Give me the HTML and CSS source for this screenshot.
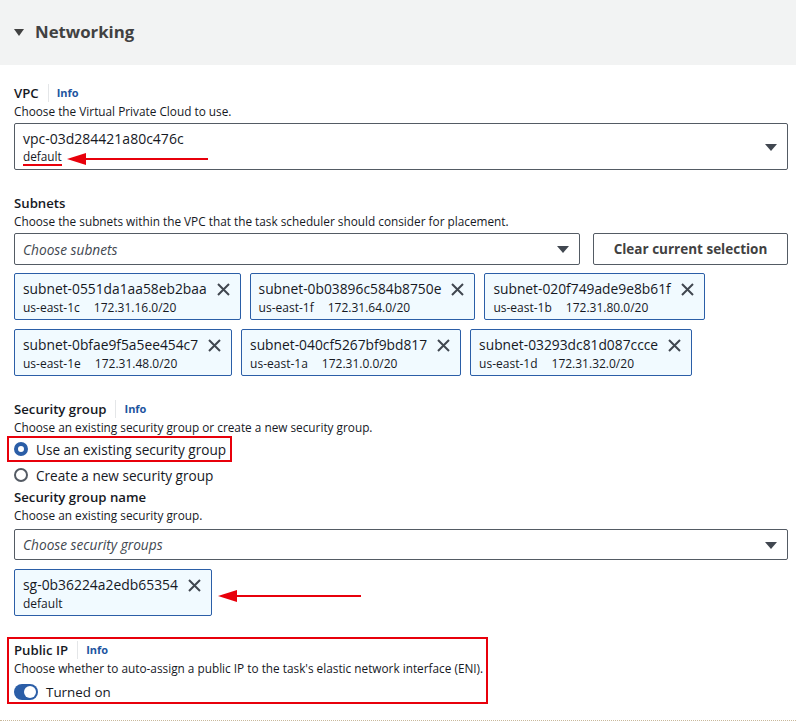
FILE: index.html
```html
<!DOCTYPE html>
<html>
<head>
<meta charset="utf-8">
<link rel="stylesheet" href="styles.css">
</head>
<body>
<div class="header">
  <svg class="hdr-caret" width="10" height="8" viewBox="0 0 10 8"><path d="M0 0 H10 L5 7 Z" fill="#414141"/></svg>
  <h2 class="title">Networking</h2>
</div>
<div class="content">
  <div class="field vpc-field">
    <div class="label-row"><span class="label">VPC</span><span class="sep"></span><span class="info">Info</span></div>
    <div class="desc">Choose the Virtual Private Cloud to use.</div>
    <div class="select big">
      <div class="sel-text">
        <div class="sel-main">vpc-03d284421a80c476c</div>
        <div class="sel-sub"><span class="red-under">default</span></div>
      </div>
      <svg class="caret" width="12" height="8" viewBox="0 0 12 8"><path d="M0 0 H12 L6 7 Z" fill="#414750"/></svg>
    </div>
    <svg class="arrow arrow-vpc" width="142" height="14" viewBox="0 0 142 14"><path d="M18 7 H141" stroke="#e8000b" stroke-width="2"/><path d="M0 7 L19 1 L19 13 Z" fill="#e8000b"/></svg>
  </div>

  <div class="field subnets">
    <div class="label-row"><span class="label">Subnets</span></div>
    <div class="desc">Choose the subnets within the VPC that the task scheduler should consider for placement.</div>
    <div class="sel-row">
      <div class="select small sub-select">
        <span class="placeholder">Choose subnets</span>
        <svg class="caret" width="12" height="8" viewBox="0 0 12 8"><path d="M0 0 H12 L6 7 Z" fill="#414750"/></svg>
      </div>
      <button class="btn">Clear current selection</button>
    </div>
    <div class="tokens">
      <div class="token"><div class="tk-text"><div class="tk-main">subnet-0551da1aa58eb2baa</div><div class="tk-sub"><span>us-east-1c</span><span>172.31.16.0/20</span></div></div><svg class="x" width="13" height="13" viewBox="0 0 13 13"><path d="M1 1 L12 12 M12 1 L1 12" stroke="#414750" stroke-width="2"/></svg></div>
      <div class="token"><div class="tk-text"><div class="tk-main">subnet-0b03896c584b8750e</div><div class="tk-sub"><span>us-east-1f</span><span>172.31.64.0/20</span></div></div><svg class="x" width="13" height="13" viewBox="0 0 13 13"><path d="M1 1 L12 12 M12 1 L1 12" stroke="#414750" stroke-width="2"/></svg></div>
      <div class="token"><div class="tk-text"><div class="tk-main">subnet-020f749ade9e8b61f</div><div class="tk-sub"><span>us-east-1b</span><span>172.31.80.0/20</span></div></div><svg class="x" width="13" height="13" viewBox="0 0 13 13"><path d="M1 1 L12 12 M12 1 L1 12" stroke="#414750" stroke-width="2"/></svg></div>
      <div class="token"><div class="tk-text"><div class="tk-main">subnet-0bfae9f5a5ee454c7</div><div class="tk-sub"><span>us-east-1e</span><span>172.31.48.0/20</span></div></div><svg class="x" width="13" height="13" viewBox="0 0 13 13"><path d="M1 1 L12 12 M12 1 L1 12" stroke="#414750" stroke-width="2"/></svg></div>
      <div class="token"><div class="tk-text"><div class="tk-main">subnet-040cf5267bf9bd817</div><div class="tk-sub"><span>us-east-1a</span><span>172.31.0.0/20</span></div></div><svg class="x" width="13" height="13" viewBox="0 0 13 13"><path d="M1 1 L12 12 M12 1 L1 12" stroke="#414750" stroke-width="2"/></svg></div>
      <div class="token"><div class="tk-text"><div class="tk-main">subnet-03293dc81d087ccce</div><div class="tk-sub"><span>us-east-1d</span><span>172.31.32.0/20</span></div></div><svg class="x" width="13" height="13" viewBox="0 0 13 13"><path d="M1 1 L12 12 M12 1 L1 12" stroke="#414750" stroke-width="2"/></svg></div>
    </div>
  </div>

  <div class="field sg">
    <div class="label-row"><span class="label">Security group</span><span class="sep"></span><span class="info">Info</span></div>
    <div class="desc">Choose an existing security group or create a new security group.</div>
    <div class="radios">
      <div class="radio-row boxed"><span class="radio on"></span><span class="radio-label">Use an existing security group</span></div>
      <div class="radio-row"><span class="radio"></span><span class="radio-label">Create a new security group</span></div>
    </div>
    <div class="label-row sg-name"><span class="label">Security group name</span></div>
    <div class="desc">Choose an existing security group.</div>
    <div class="select small sg-select">
      <span class="placeholder">Choose security groups</span>
      <svg class="caret" width="12" height="8" viewBox="0 0 12 8"><path d="M0 0 H12 L6 7 Z" fill="#414750"/></svg>
    </div>
    <div class="tokens sg-tokens">
      <div class="token"><div class="tk-text"><div class="tk-main">sg-0b36224a2edb65354</div><div class="tk-sub"><span>default</span></div></div><svg class="x" width="13" height="13" viewBox="0 0 13 13"><path d="M1 1 L12 12 M12 1 L1 12" stroke="#414750" stroke-width="2"/></svg></div>
    </div>
    <svg class="arrow arrow-sg" width="144" height="14" viewBox="0 0 144 14"><path d="M18 7 H143" stroke="#e8000b" stroke-width="2"/><path d="M0 7 L19 1 L19 13 Z" fill="#e8000b"/></svg>
  </div>

  <div class="field pip">
    <div class="label-row"><span class="label">Public IP</span><span class="sep"></span><span class="info">Info</span></div>
    <div class="desc">Choose whether to auto-assign a public IP to the task's elastic network interface (ENI).</div>
    <div class="toggle-row"><span class="toggle"><span class="knob"></span></span><span class="toggle-label">Turned on</span></div>
  </div>
</div>
<div class="bottom-line"></div>
</body>
</html>
```

FILE: styles.css
```css
* { box-sizing: border-box; }
html, body { margin: 0; padding: 0; background: #fff; }
body {
  width: 796px;
  height: 723px;
  overflow: hidden;
  font-family: "Open Sans", "Noto Sans", sans-serif;
  color: #16191f;
  position: relative;
}
.header {
  height: 65px;
  background: #f2f3f3;
  display: flex;
  align-items: center;
  padding-left: 14px;
  padding-bottom: 1px;
}
.hdr-caret { margin-right: 11px; margin-top: 1px; }
.title {
  margin: 0;
  font-size: 16.8px;
  font-weight: 700;
  color: #414141;
  line-height: 24px;
}
.content {
  padding: 17px 8px 0 14px;
}
.field { position: relative; }
.label-row {
  display: flex;
  align-items: center;
  height: 21px;
}
.label {
  font-size: 13.2px;
  font-weight: 600;
  color: #16191f;
}
.sep {
  width: 1px;
  height: 18px;
  background: #e4e6e8;
  margin: 0 8px 0 9px;
}
.info {
  font-size: 11px;
  font-weight: 700;
  color: #1d55a0;
}
.desc {
  font-size: 11.8px;
  color: #16191f;
  line-height: 16px;
  height: 16px;
  white-space: nowrap;
}
.select {
  border: 1px solid #545b64;
  border-radius: 2px;
  display: flex;
  align-items: center;
  justify-content: space-between;
  padding: 0 10px 0 8px;
}
.select.big { height: 47px; margin-top: 4px; }
.select.small { height: 31px; margin-top: 4px; }
.sel-text { padding-top: 2px; }
.sel-main { font-size: 14px; font-weight: 500; line-height: 18px; color: #16191f; }
.sel-sub { font-size: 11.8px; line-height: 17px; color: #16191f; }
.red-under { border-bottom: 2px solid #e8000b; }
.caret { margin-top: 2px; }
.placeholder { font-size: 13.7px; font-style: italic; color: #414750; }
.arrow { position: absolute; }
.arrow-vpc { left: 53px; top: 70px; }
.subnets { margin-top: 22px; }
.sel-row { display: flex; gap: 13px; margin-top: 4px; }
.sub-select { flex: 0 0 566px; margin-top: 0 !important; height: 32px !important; }
.btn {
  flex: 1;
  height: 32px;
  border: 1px solid #545b64;
  border-radius: 2px;
  background: #fff;
  font-family: inherit;
  font-size: 13.5px;
  font-weight: 700;
  color: #414141;
  padding: 0;
}
.tokens {
  display: flex;
  flex-wrap: wrap;
  gap: 9px 9px;
  margin-top: 8px;
  width: 720px;
}
.token {
  height: 47px;
  background: #f1faff;
  border: 1px solid #2b5ea7;
  border-radius: 2px;
  display: flex;
  align-items: flex-start;
  padding: 5px 10px 0 8px;
}
.tk-main { font-size: 13.8px; font-weight: 500; line-height: 20px; color: #16191f; }
.tk-sub { font-size: 12px; line-height: 18px; color: #16191f; display: flex; gap: 14px; }
.x { margin-left: 10px; margin-top: 4px; }
.sg { margin-top: 22px; }
.radios { margin-top: 1px; }
.radio-row {
  display: flex;
  align-items: center;
  height: 26px;
}
.radio-row.boxed {
  width: fit-content;
  margin-left: -7px;
  padding: 0 4px 0 5px;
  border: 2px solid #e8000b;
}
.radio {
  width: 14px;
  height: 14px;
  border-radius: 50%;
  border: 2px solid #545b64;
  margin-right: 8px;
  background: #fff;
  flex: none;
}
.radio.on { border: 4px solid #2b5ea7; }
.radio-label { font-size: 13.6px; font-weight: 500; color: #16191f; }
.label-row.sg-name { margin-top: -2px; }
.select.sg-select { margin-top: 6px; }
.sg-tokens { margin-top: 9px; }
.sg-tokens .tk-main { font-size: 13.9px; }
.arrow-sg { left: 204px; top: 191px; }
.pip {
  margin-top: 21px;
  margin-left: -7px;
  width: fit-content;
  border: 2px solid #e8000b;
  padding: 0 3px 0 5px;
}
.toggle-row {
  display: flex;
  align-items: flex-end;
  height: 26px;
  padding-bottom: 2px;
}
.toggle {
  width: 24px;
  height: 16px;
  border-radius: 8px;
  background: #2b5ea7;
  position: relative;
  margin-right: 8px;
  flex: none;
}
.knob {
  position: absolute;
  right: 2px;
  top: 2px;
  width: 12px;
  height: 12px;
  border-radius: 50%;
  background: #fff;
}
.toggle-label { font-size: 13.4px; font-weight: 500; color: #16191f; line-height: 16px; }
.bottom-line {
  position: absolute;
  left: 0;
  right: 0;
  top: 720px;
  border-top: 1px dotted #c8b89a;
}
```
